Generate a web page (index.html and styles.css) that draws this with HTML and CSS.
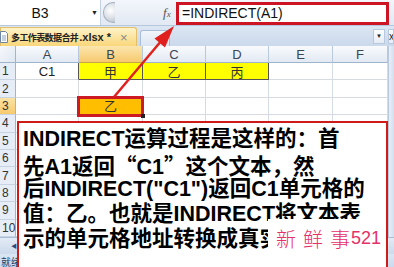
FILE: index.html
```html
<!DOCTYPE html>
<html lang="zh-CN">
<head>
<meta charset="utf-8">
<title>INDIRECT</title>
<link rel="stylesheet" href="styles.css">
</head>
<body>
<div class="app">
  <div class="fbar">
    <div class="namebox"><span class="nb-text">B3</span><span class="nb-arrow">▼</span></div>
    <div class="fxzone"><span class="pill"></span><span class="fx">f<small>x</small></span></div>
    <div class="formula">=INDIRECT(A1)</div>
  </div>
  <div class="tabs">
    <div class="doctab">
      <svg class="docicon" width="8" height="12" viewBox="0 0 8 12"><path d="M0.5 0.5h5l2 2v9h-7z" fill="#fff" stroke="#6d86a8"/><path d="M2 5h4M2 7h4M2 9h4" stroke="#8aa2c2"/></svg>
      <span class="tabname"><span class="tab-cjk">多工作表数据合并</span>.xlsx *</span>
      <span class="close">×</span>
    </div>
    <div class="newtab"></div>
    <div class="tabfill"></div>
    <div class="winbtn">▼</div>
    <div class="winbtn last">x</div>
  </div>
  <div class="sheet">
    <div class="grid">
      <div class="corner"></div><div class="ch">A</div><div class="ch sel">B</div><div class="ch">C</div><div class="ch">D</div><div class="ch">E</div><div class="ch">F</div>
      <div class="rh">1</div><div class="c dk">C1</div><div class="c y">甲</div><div class="c y">乙</div><div class="c y">丙</div><div class="c"></div><div class="c"></div>
      <div class="rh">2</div><div class="c"></div><div class="c"></div><div class="c"></div><div class="c"></div><div class="c"></div><div class="c"></div>
      <div class="rh sel">3</div><div class="c"></div><div class="c o">乙</div><div class="c"></div><div class="c"></div><div class="c"></div><div class="c"></div>
      <div class="rh">4</div><div class="c"></div><div class="c"></div><div class="c"></div><div class="c"></div><div class="c"></div><div class="c"></div>
      <div class="rh">5</div><div class="c"></div><div class="c"></div><div class="c"></div><div class="c"></div><div class="c"></div><div class="c"></div>
      <div class="rh">6</div><div class="c"></div><div class="c"></div><div class="c"></div><div class="c"></div><div class="c"></div><div class="c"></div>
      <div class="rh">7</div><div class="c"></div><div class="c"></div><div class="c"></div><div class="c"></div><div class="c"></div><div class="c"></div>
      <div class="rh">8</div><div class="c"></div><div class="c"></div><div class="c"></div><div class="c"></div><div class="c"></div><div class="c"></div>
      <div class="rh">9</div><div class="c"></div><div class="c"></div><div class="c"></div><div class="c"></div><div class="c"></div><div class="c"></div>
      <div class="rh">10</div><div class="c"></div><div class="c"></div><div class="c"></div><div class="c"></div><div class="c"></div><div class="c"></div>
    </div>
    <div class="vscroll"></div>
  </div>
  <div class="sheettabs"><span class="nav">◀</span></div>
  <div class="status">就绪</div>

  <div class="selbox"><span class="handle"></span></div>

  <div class="callout">
    <div class="line">INDIRECT运算过程是这样的：首</div>
    <div class="line">先A1返回<span class="cq">“</span>C1<span class="cq">”</span>这个文本，然</div>
    <div class="line">后INDIRECT("C1")返回C1单元格的</div>
    <div class="line">值：乙。也就是INDIRECT将文本表</div>
    <div class="line">示的单元格地址转换成真实的引用</div>
  </div>

  <svg class="arrow" width="394" height="267" viewBox="0 0 394 267">
    <line x1="114" y1="97" x2="162" y2="40" stroke="#e0201e" stroke-width="2.5"/>
    <polygon points="174,26 165,47.5 154.5,38.5" fill="#e0201e"/>
  </svg>

  <div class="watermark"><span class="wm-cjk">新鲜</span><span class="wm-last">事</span><span class="wm-num">521</span></div>
</div>
</body>
</html>
```
FILE: styles.css
```css
html, body {
  margin: 0;
  padding: 0;
  background: #fff;
}

.app {
  position: relative;
  width: 394px;
  height: 267px;
  overflow: hidden;
  font-family: "Liberation Sans", "Noto Sans CJK SC", sans-serif;
  color: #222;
  background: #fff;
}

/* formula bar */
.fbar {
  display: flex;
  height: 26px;
  box-sizing: border-box;
  background: linear-gradient(#f3f6fb, #e2e9f3);
  border-bottom: 1px solid #b6c8de;
}

.namebox {
  width: 101px;
  display: flex;
  align-items: center;
  background: #fff;
  box-sizing: border-box;
  border-right: 1px solid #c4d1e2;
}

.nb-text {
  width: 80px;
  text-align: center;
  font-size: 14px;
  color: #111;
}

.nb-arrow {
  margin-left: 11px;
  font-size: 7px;
  color: #222;
}

.fxzone {
  width: 75px;
  display: flex;
  align-items: center;
  box-sizing: border-box;
  padding-left: 2px;
}

.pill {
  width: 11px;
  height: 19px;
  border-radius: 10px 0 0 10px;
  background: radial-gradient(circle at 60% 40%, #ffffff 0, #e3e7ec 45%, #b9c1cc 100%);
  border: 1px solid #a7b2c1;
  border-right: none;
}

.fx {
  margin-left: 48px;
  font-family: "Liberation Serif", serif;
  font-style: italic;
  font-size: 13px;
  color: #555;
}

.fx small {
  font-size: 9px;
}

.formula {
  width: 213px;
  height: 23px;
  margin-top: 2px;
  box-sizing: border-box;
  border: 3px solid #cc1424;
  background: #fff;
  font-size: 14px;
  line-height: 17px;
  padding-left: 3px;
  color: #111;
}

/* document tabs */
.tabs {
  display: flex;
  align-items: flex-end;
  height: 20px;
  box-sizing: border-box;
  background: linear-gradient(#dce6f3, #cbd9ec);
}

.doctab {
  width: 137px;
  height: 19px;
  box-sizing: border-box;
  display: flex;
  align-items: center;
  background: linear-gradient(#fef3c8, #f9d67a);
  border: 1px solid #e2bf68;
  border-bottom: none;
  border-radius: 0 3px 0 0;
}

.docicon {
  margin-left: -1px;
  flex: none;
}

.tabname {
  margin-left: 3px;
  font-family: "Liberation Sans", sans-serif;
  font-weight: bold;
  font-size: 11px;
  white-space: nowrap;
  color: #222;
}

.tab-cjk {
  font-family: "Noto Sans CJK SC", sans-serif;
  font-size: 9px;
  letter-spacing: -0.6px;
  margin-right: 1px;
}

.close {
  margin-left: 9px;
  font-size: 13px;
  color: #8a8a8a;
}

.newtab {
  width: 30px;
  height: 16px;
  margin-left: 3px;
  box-sizing: border-box;
  background: linear-gradient(#f2f6fb, #dbe5f2);
  border: 1px solid #a8bdd6;
  border-bottom: none;
  border-radius: 3px 3px 0 0;
}

.tabfill {
  flex: 1;
}

.winbtn {
  width: 12px;
  height: 15px;
  margin-bottom: 2px;
  box-sizing: border-box;
  background: linear-gradient(#fbfcfe, #e6ecf5);
  border: 1px solid #b9c9dd;
  font-size: 6px;
  line-height: 13px;
  text-align: center;
  color: #222;
  margin-right: 3px;
}

.winbtn.last {
  margin-right: 0;
  width: 6px;
  font-size: 10px;
  overflow: hidden;
}

/* sheet */
.sheet {
  display: flex;
}

.grid {
  display: grid;
  grid-template-columns: 16px 63px 64px 63px 63px 64px 55px;
  grid-template-rows: 17px repeat(10, 17.4px);
  font-size: 13px;
}

.grid > div {
  box-sizing: border-box;
  display: flex;
  align-items: center;
  justify-content: center;
}

.corner {
  background: linear-gradient(135deg, #f7f9fc 0, #dfe7f1 100%);
  border-right: 1px solid #9fb5cd;
  border-bottom: 1px solid #9fb5cd;
}

.ch {
  background: linear-gradient(#f9fbfd, #e2e9f3);
  border-right: 1px solid #b9c9dc;
  border-bottom: 1px solid #9fb5cd;
  color: #3a4654;
  font-size: 13px;
}

.ch.sel {
  background: linear-gradient(#fbe6ae, #f7c96e);
  border-bottom-color: #c9a24c;
}

.rh {
  background: #e6edf7;
  border-right: 1px solid #9fb5cd;
  border-bottom: 1px solid #c5d3e3;
  font-size: 12px;
  color: #333;
  justify-content: flex-start !important;
  padding-left: 2px;
}

.rh.sel {
  background: linear-gradient(#fbe3a4, #f7c96e);
}

.c {
  border-right: 1px solid #d6dbe2;
  border-bottom: 1px solid #d6dbe2;
  color: #222;
}

.c.dk {
  border-right-color: #555;
}

.c.y {
  background: #ffff00;
  border-right: 1px solid #555;
  border-bottom: 1px solid #555;
  color: #333;
  font-family: "Noto Sans CJK SC", sans-serif;
  font-size: 13px;
}

.c.o {
  background: #ffbe00;
  font-family: "Noto Sans CJK SC", sans-serif;
  font-size: 13px;
  color: #333;
}

.vscroll {
  width: 6px;
  background: linear-gradient(90deg, #e9eff8, #d2deee);
  border-left: 1px solid #b9c9dd;
  box-sizing: border-box;
}

.sheettabs {
  height: 17px;
  background: linear-gradient(#e2eaf5, #ccdaeb);
  border-top: 1px solid #a9bdd5;
  box-sizing: border-box;
  display: flex;
  align-items: center;
}

.nav {
  margin-left: 11px;
  font-size: 6px;
  color: #2b4a7a;
}

.status {
  height: 18px;
  background: linear-gradient(#dbe6f4, #c4d5ea);
  font-size: 10px;
  line-height: 12px;
  padding-left: 1px;
  padding-top: 2px;
  box-sizing: border-box;
  color: #1e395b;
  font-family: "Noto Sans CJK SC", sans-serif;
}

/* overlays */
.selbox {
  position: absolute;
  left: 77px;
  top: 96px;
  width: 67px;
  height: 21px;
  box-sizing: border-box;
  border: 3px solid #cc1b25;
}

.handle {
  position: absolute;
  right: -4px;
  bottom: -4px;
  width: 4px;
  height: 4px;
  background: #222;
}

.callout {
  position: absolute;
  left: 17px;
  top: 121px;
  width: 371px;
  height: 160px;
  box-sizing: border-box;
  border: 2px solid #cf1a1a;
  background: #fff;
  padding: 4px 0 0 4px;
  font-family: "Liberation Sans", "Noto Sans CJK SC", sans-serif;
  font-weight: bold;
  font-size: 21.5px;
  line-height: 25px;
  color: #000;
}

.line {
  white-space: nowrap;
  height: 25px;
}

.cq {
  font-family: "Noto Sans CJK SC", sans-serif;
}

.arrow {
  position: absolute;
  left: 0;
  top: 0;
  pointer-events: none;
}

.watermark {
  position: absolute;
  left: 268px;
  top: 219px;
  width: 115px;
  height: 38px;
  background: #fff;
  color: #e5306a;
  display: flex;
  align-items: center;
  padding-left: 8px;
  box-sizing: border-box;
  white-space: nowrap;
  font-family: "Noto Sans CJK SC", sans-serif;
  font-size: 20px;
  font-weight: 300;
}

.wm-cjk {
  letter-spacing: 7px;
}

.wm-num {
  font-family: "Liberation Sans", sans-serif;
  font-size: 18px;
  margin-left: 1px;
}
```
